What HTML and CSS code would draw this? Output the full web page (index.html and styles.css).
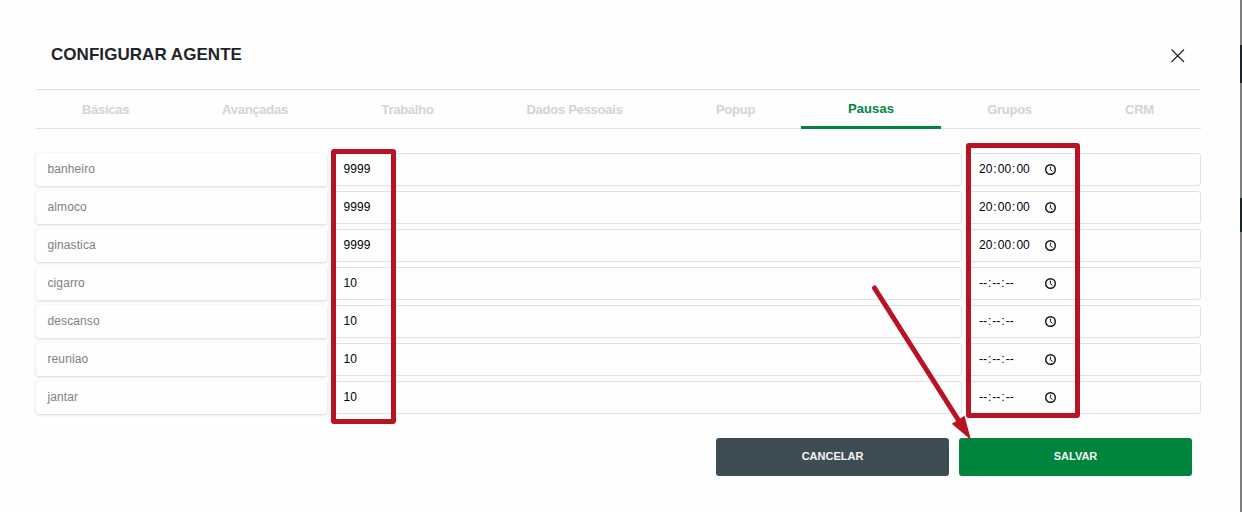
FILE: index.html
```html
<!DOCTYPE html>
<html lang="pt-BR">
<head>
    <meta charset="UTF-8">
    <meta name="viewport" content="width=device-width, initial-scale=1.0">
    <title>Configurar Agente</title>
    <link rel="stylesheet" href="styles.css">
</head>

<body>
    <main class="modal">
        <header class="modal-header">
            <h1 class="modal-title">CONFIGURAR AGENTE</h1>
            <svg class="close" width="14" height="14" viewBox="0 0 14 14">
                <path d="M0.5 0.5 L13 13 M13 0.5 L0.5 13"/>
            </svg>
        </header>

        <nav class="tabs">
            <span class="tab">Básicas</span>
            <span class="tab">Avançadas</span>
            <span class="tab">Trabalho</span>
            <span class="tab">Dados Pessoais</span>
            <span class="tab">Popup</span>
            <span class="tab active">Pausas</span>
            <span class="tab">Grupos</span>
            <span class="tab">CRM</span>
        </nav>

        <section class="pausas" id="pausas"></section>

        <footer class="modal-footer">
            <button class="btn btn-cancel">CANCELAR</button>
            <button class="btn btn-save">SALVAR</button>
        </footer>
    </main>

    <aside class="backdrop">
        <div class="backdrop-block"></div>
        <div class="backdrop-block second"></div>
    </aside>

    <!-- highlights -->
    <div class="mark mark-limit"></div>
    <div class="mark mark-time"></div>
    <svg class="arrow" width="110" height="165" viewBox="0 0 110 165">
        <path class="arrow-line" d="M9.5 8 L94 141"/>
        <path class="arrow-head" d="M106 160 L86.8 143.8 L99.5 135.8 Z"/>
    </svg>

    <script src="script.js"></script>
</body>
</html>
```

FILE: styles.css
```css
* {
    box-sizing: border-box;
}
body {
    display: flex;
    height: 512px;
    margin: 0;
    overflow: hidden;
    position: relative;
    background: #fefefe;
    font-family: "Liberation Sans", Arial, sans-serif;
}
.modal {
    width: 1240px;
    padding: 0 39px 0 36px;
}
.modal-header {
    display: flex;
    justify-content: space-between;
    height: 89px;
    padding: 44px 16px 0 15px;
}
.modal-title {
    margin: 0;
    font-size: 17px;
    letter-spacing: 0.05px;
    line-height: 22px;
    color: #212529;
}
.close {
    margin-top: 5px;
    fill: none;
    stroke: #212529;
    stroke-width: 1.2;
}

/* tabs */
.tabs {
    display: grid;
    grid-template-columns: 138fr 161fr 144fr 190fr 132fr 140fr 136fr 124fr;
    height: 40px;
    border-top: 1px solid #dee2e6;
    border-bottom: 1px solid #dee2e6;
}
.tab {
    padding-left: 1px;
    text-align: center;
    font-size: 13px;
    font-weight: bold;
    letter-spacing: -0.25px;
    line-height: 39px;
    color: #d3d3d3;
}
.tab.active {
    height: 39px;
    padding-left: 0;
    border-bottom: 3px solid #00853f;
    border-radius: 2px 2px 0 0;
    letter-spacing: 0.1px;
    line-height: 37px;
    color: #00853f;
}

/* rows */
.pausas {
    display: grid;
    row-gap: 5px;
    padding-top: 24px;
}
.row {
    display: grid;
    grid-template-columns: 291px 630px 234px;
    column-gap: 5px;
    height: 33px;
    font-size: 12px;
    line-height: 31px;
}
.nome {
    padding-left: 11.5px;
    border-radius: 3px;
    box-shadow: 0 1px 3px rgba(0, 0, 0, 0.17);
    letter-spacing: 0.1px;
    line-height: 32px;
    color: #808080;
}
.field {
    border: 1px solid #dee2e6;
    border-radius: 3px;
    padding-left: 10.5px;
    letter-spacing: 0.1px;
    color: #000;
}
.time {
    display: flex;
    padding-left: 10px;
    letter-spacing: 0;
}
.time-text {
    width: 67px;
}
.time-text span {
    padding: 0 1px;
}
.clock {
    margin-top: 10px;
    fill: none;
    stroke: #111;
}

/* buttons */
.modal-footer {
    display: flex;
    justify-content: flex-end;
    gap: 10px;
    padding: 24px 9px 0 0;
}
.btn {
    width: 233px;
    height: 38px;
    padding: 0 0 2px;
    border: none;
    border-radius: 3px;
    font-family: inherit;
    font-size: 11px;
    font-weight: bold;
    color: #f5f5f5;
}
.btn-cancel {
    background: #3e4d54;
}
.btn-save {
    background: #00853f;
}

/* page behind the modal */
.backdrop {
    width: 2px;
    padding-top: 45px;
    background: #7f7f7f;
}
.backdrop-block {
    height: 38px;
    background: #1c2629;
}
.backdrop-block.second {
    height: 34px;
    margin-top: 115px;
}

.mark {
    position: absolute;
    border: 5px solid #b91222;
    border-radius: 3px;
}
.mark-limit {
    left: 331px;
    top: 149px;
    width: 65px;
    height: 275px;
}
.mark-time {
    left: 966px;
    top: 143px;
    width: 114px;
    height: 275px;
}
.arrow {
    position: absolute;
    left: 865px;
    top: 280px;
}
.arrow-line {
    stroke: #b91222;
    stroke-width: 5;
    stroke-linecap: round;
}
.arrow-head {
    fill: #b91222;
}
```

FILE: script.js
```javascript
const pausas = [
    ["banheiro", "9999", "20:00:00"],
    ["almoco", "9999", "20:00:00"],
    ["ginastica", "9999", "20:00:00"],
    ["cigarro", "10", "--:--:--"],
    ["descanso", "10", "--:--:--"],
    ["reuniao", "10", "--:--:--"],
    ["jantar", "10", "--:--:--"]
];

const clock = `<svg class="clock" width="12" height="12" viewBox="0 0 12 12">
    <circle cx="5.5" cy="5.5" r="4.8" stroke-width="1.4"/>
    <path d="M5.4 2.6 V5.8 L7.6 7.4"/>
</svg>`;

document.getElementById("pausas").innerHTML = pausas.map(function([nome, limite, hora]) {
    const partes = hora.split(":").map(p => `<span>${p}</span>`).join(":");
    return `<div class="row">
        <div class="nome">${nome}</div>
        <div class="field">${limite}</div>
        <div class="field time"><div class="time-text">${partes}</div>${clock}</div>
    </div>`;
}).join("");
```
